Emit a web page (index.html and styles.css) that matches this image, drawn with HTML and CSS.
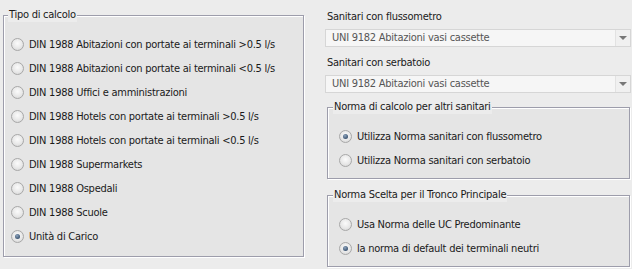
FILE: index.html
```html
<!DOCTYPE html>
<html lang="it">
<head>
<meta charset="utf-8">
<title>Tipo di calcolo</title>
<link rel="stylesheet" href="styles.css">
</head>
<body>
<div class="page">
  <div class="left">
    <div class="group group-main">
      <span class="legend">Tipo di calcolo</span>
      <div class="row"><span class="radio"></span><span>DIN 1988 Abitazioni con portate ai terminali &gt;0.5 l/s</span></div>
      <div class="row"><span class="radio"></span><span>DIN 1988 Abitazioni con portate ai terminali &lt;0.5 l/s</span></div>
      <div class="row"><span class="radio"></span><span>DIN 1988 Uffici e amministrazioni</span></div>
      <div class="row"><span class="radio"></span><span>DIN 1988 Hotels con portate ai terminali &gt;0.5 l/s</span></div>
      <div class="row"><span class="radio"></span><span>DIN 1988 Hotels con portate ai terminali &lt;0.5 l/s</span></div>
      <div class="row"><span class="radio"></span><span>DIN 1988 Supermarkets</span></div>
      <div class="row"><span class="radio"></span><span>DIN 1988 Ospedali</span></div>
      <div class="row"><span class="radio"></span><span>DIN 1988 Scuole</span></div>
      <div class="row"><span class="radio checked"></span><span>Unità di Carico</span></div>
    </div>
  </div>
  <div class="right">
    <div class="label first">Sanitari con flussometro</div>
    <div class="combo"><span class="combo-text">UNI 9182 Abitazioni vasi cassette</span><span class="combo-btn"><span class="arrow"></span></span></div>
    <div class="label">Sanitari con serbatoio</div>
    <div class="combo"><span class="combo-text">UNI 9182 Abitazioni vasi cassette</span><span class="combo-btn"><span class="arrow"></span></span></div>
    <div class="group group-side g2">
      <span class="legend">Norma di calcolo per altri sanitari</span>
      <div class="row"><span class="radio checked"></span><span>Utilizza Norma sanitari con flussometro</span></div>
      <div class="row"><span class="radio"></span><span>Utilizza Norma sanitari con serbatoio</span></div>
    </div>
    <div class="group group-side g3">
      <span class="legend">Norma Scelta per il Tronco Principale</span>
      <div class="row"><span class="radio"></span><span>Usa Norma delle UC Predominante</span></div>
      <div class="row"><span class="radio checked"></span><span>la norma di default dei terminali neutri</span></div>
    </div>
  </div>
</div>
</body>
</html>
```

FILE: styles.css
```css
html, body {
  margin: 0;
  padding: 0;
  background: #ececec;
}
body {
  font-family: "DejaVu Sans Condensed", "DejaVu Sans", sans-serif;
  font-size: 11px;
  letter-spacing: -0.25px;
  color: #1a1a1a;
  width: 632px;
  height: 269px;
  overflow: hidden;
}
.page {
  display: flex;
  align-items: flex-start;
}
.left {
  margin-left: 3px;
  padding-top: 15px;
}
.group {
  position: relative;
  box-sizing: border-box;
  border: 1px solid #9d9dab;
  box-shadow: 1px 1px 0 #ffffff, inset 1px 1px 0 #ffffff;
  background: #e5e5e5;
}
.group-main {
  width: 301px;
  height: 242px;
  padding: 16px 0 0 7px;
}
.legend {
  position: absolute;
  top: -8px;
  left: 4px;
  line-height: 14px;
  padding: 0 1px;
  background: #ececec;
}
.row {
  display: flex;
  align-items: center;
  gap: 5px;
  height: 24px;
  white-space: nowrap;
}
.radio {
  box-sizing: border-box;
  width: 13px;
  height: 13px;
  flex: none;
  border-radius: 50%;
  border: 1px solid #a8a8a8;
  background: radial-gradient(circle at 50% 40%, #fbfbfb 0%, #e8e8e8 55%, #d0d0d0 100%);
  display: flex;
  align-items: center;
  justify-content: center;
}
.radio.checked::after {
  content: "";
  width: 5px;
  height: 5px;
  border-radius: 50%;
  background: radial-gradient(circle at 40% 35%, #8ea4bd 0%, #3d5673 70%, #2b3f57 100%);
}
.right {
  margin-left: 21px;
  width: 306px;
  display: flex;
  flex-direction: column;
}
.label {
  line-height: 14px;
  margin-top: 9px;
  padding-left: 2px;
}
.label.first {
  margin-top: 10px;
}
.combo {
  margin-top: 5px;
  box-sizing: border-box;
  height: 18px;
  border: 1px solid #d6d6d6;
  background: #f6f6f6;
  display: flex;
  align-items: stretch;
}
.combo-text {
  flex: 1;
  color: #555555;
  padding-left: 6px;
  line-height: 16px;
}
.combo-btn {
  width: 14px;
  border-left: 1px solid #e2e2e2;
  background: #f0f0f0;
  display: flex;
  align-items: center;
  justify-content: center;
}
.arrow {
  width: 0;
  height: 0;
  border-left: 4px solid transparent;
  border-right: 4px solid transparent;
  border-top: 4px solid #777777;
}
.group-side {
  margin-left: 2px;
  width: 303px;
  height: 72px;
  padding: 16px 0 0 11px;
}
.group-side .legend {
  left: 5px;
}
.g2 {
  margin-top: 14px;
}
.g3 {
  margin-top: 16px;
}
```
